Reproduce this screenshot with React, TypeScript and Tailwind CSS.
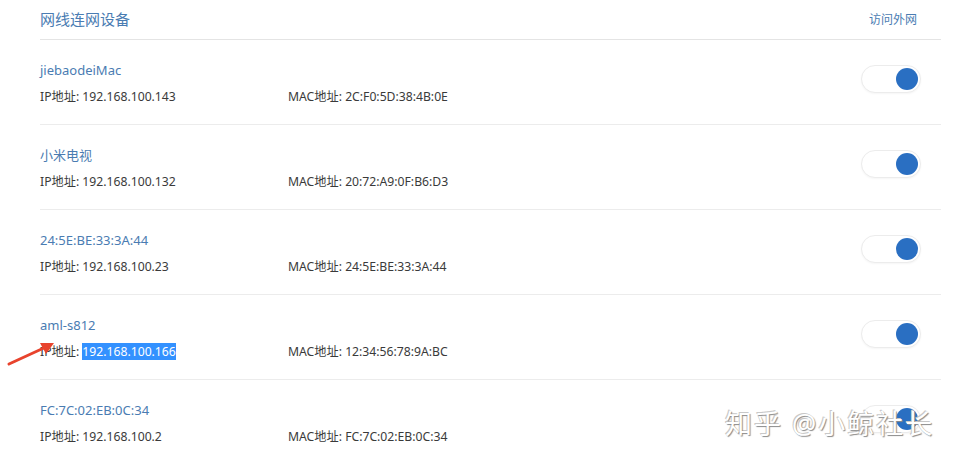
const devices = [
  { name: "jiebaodeiMac", ip: "192.168.100.143", mac: "2C:F0:5D:38:4B:0E" },
  { name: "小米电视", ip: "192.168.100.132", mac: "20:72:A9:0F:B6:D3" },
  { name: "24:5E:BE:33:3A:44", ip: "192.168.100.23", mac: "24:5E:BE:33:3A:44" },
  { name: "aml-s812", ip: "192.168.100.166", mac: "12:34:56:78:9A:BC", selected: true },
  { name: "FC:7C:02:EB:0C:34", ip: "192.168.100.2", mac: "FC:7C:02:EB:0C:34" },
];

function Toggle() {
  return (
    <div className="mb-[6px] flex h-[28px] w-[60px] items-center justify-end rounded-full border border-[#ececec] bg-white pr-[2px] shadow-[0_1px_2px_rgba(0,0,0,0.04)]">
      <div className="h-[22px] w-[22px] rounded-full bg-[#2a6fc2]" />
    </div>
  );
}

export default function App() {
  return (
    <div
      className="relative h-[463px] w-[957px] overflow-hidden bg-white"
      style={{ fontFamily: '"Noto Sans", "Noto Sans CJK SC", sans-serif' }}
    >
      <div className="ml-[40px] mr-[16px]">
        <div className="flex h-[40px] items-center justify-between border-b border-[#e4e4e4]">
          <span className="text-[15px] text-[#4a7cb2]">网线连网设备</span>
          <span className="mr-[24px] text-[12px] text-[#4a7cb2]">访问外网</span>
        </div>

        {devices.map((d) => (
          <div
            key={d.name}
            className="flex h-[85px] items-center justify-between border-b border-[#ececec]"
          >
            <div className="mt-[2px] flex flex-col gap-[9px]">
              <span className="text-[13px] leading-[18px] text-[#4a7cb2]">{d.name}</span>
              <div className="flex text-[12.2px] leading-[17px] text-[#3a3a3a]">
                <span className="w-[248px]">
                  IP地址:{" "}
                  <span className={d.selected ? "bg-[#3391ff] text-white" : ""}>{d.ip}</span>
                </span>
                <span>MAC地址: {d.mac}</span>
              </div>
            </div>
            <div className="mr-[20px]">
              <Toggle />
            </div>
          </div>
        ))}
      </div>

      {/* red arrow pointing at the selected IP */}
      <svg className="absolute left-[6px] top-[338px]" width="52" height="30" viewBox="0 0 52 30">
        <line x1="3" y1="26" x2="40" y2="9" stroke="#e8432d" strokeWidth="3" strokeLinecap="round" />
        <polygon points="48,5 34,5 40,16" fill="#e8432d" />
      </svg>

      <div className="absolute left-[725px] top-[404px] text-[27px] tracking-[2px] text-white [text-shadow:1px_1px_1px_#8a8a8a,-1px_-1px_0_#c8c8c8]">
        知乎 @小鲸社长
      </div>
    </div>
  );
}
